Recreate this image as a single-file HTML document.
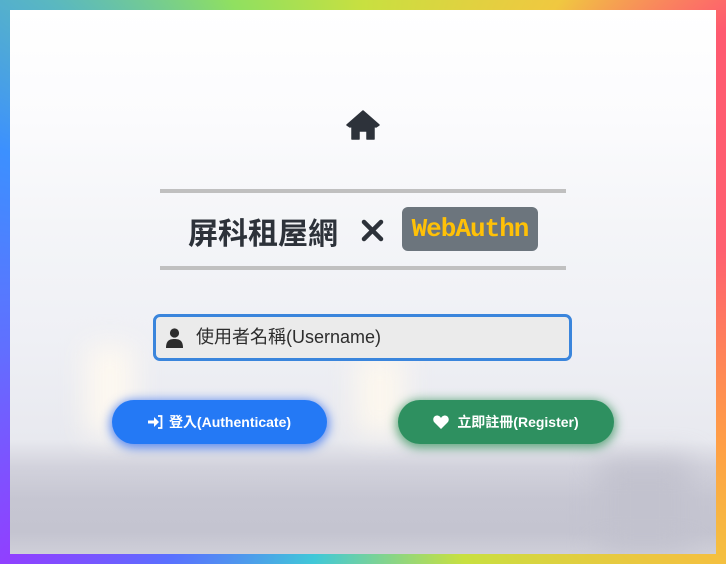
<!DOCTYPE html>
<html><head><meta charset="utf-8"><style>
*{margin:0;padding:0;box-sizing:border-box}
html,body{width:726px;height:564px;overflow:hidden}
body{position:relative;font-family:"Liberation Sans","Noto Sans CJK TC",sans-serif;
background:conic-gradient(from 0deg at 50% 50%,#c8e040 0deg,#f0c840 35deg,#ff5a70 55deg,#ff6070 85deg,#ffa045 115deg,#f4c040 128deg,#c8e040 160deg,#40c8d8 190deg,#5a70ff 215deg,#9040ff 232deg,#6070ff 260deg,#3c90ff 290deg,#5ab8c0 312deg,#90e060 335deg,#c8e040 360deg)}
.inner{position:absolute;left:10px;top:10px;width:706px;height:544px;overflow:hidden;
background:linear-gradient(180deg,#ffffff 0%,#fbfbfd 20%,#f4f5f8 40%,#eff0f5 60%,#e8e9ef 79%,#d2d2dc 84%,#c6c6d2 90%,#c4c4d0 96%,#cfcfd9 100%)}
.blob{position:absolute;filter:blur(14px)}
.line{position:absolute;left:160px;width:406px;height:4px;background:#c0c0c0}
.title{position:absolute;left:0;width:726px;top:203px;font-size:30px;font-weight:bold;color:#2d323a;height:48px}
.badge{position:absolute;left:402px;top:207px;width:136px;height:44px;background:#6c757d;border-radius:6px;color:#ffc107;font-family:"Liberation Mono",monospace;font-weight:bold;font-size:26px;text-align:center;line-height:44px;letter-spacing:-1px}
.input{position:absolute;left:153px;top:314px;width:419px;height:47px;border:3px solid #3a85dc;border-radius:7px;background:#ebebeb;font-size:18px;color:#2d2d2d;line-height:41px;padding-left:40px}
.btn{position:absolute;top:400px;height:44px;border-radius:22px;color:#fff;font-weight:bold;font-size:14px;line-height:44px;text-align:center}
.b1{left:112px;width:215px;background:#2479f5;box-shadow:0 2px 10px 2px rgba(36,100,240,.7)}
.b2{left:398px;width:216px;background:#2e9060;box-shadow:0 2px 10px 2px rgba(40,140,80,.7)}
</style></head><body>
<div class="inner">
<div class="blob" style="left:75px;top:335px;width:50px;height:90px;background:#fdf8f0"></div>
<div class="blob" style="left:345px;top:345px;width:50px;height:80px;background:#fcf7ee"></div>
<div class="blob" style="left:590px;top:450px;width:90px;height:90px;background:#c2c2ce"></div>
</div>
<svg style="position:absolute;left:346px;top:110px" width="34" height="30" viewBox="0 0 34 30"><path d="M17 1 L1 15 L4 17 L6 15.5 V29 H13 V21 H21 V29 H28 V15.5 L30 17 L33 15 Z" fill="#2d323a" stroke="#2d323a" stroke-width="1.5" stroke-linejoin="round"/></svg>
<div class="line" style="top:189px"></div>
<div class="line" style="top:266px"></div>
<div class="title"><span style="position:absolute;left:188px;top:6px">屏科租屋網</span></div>
<svg style="position:absolute;left:361px;top:219px" width="23" height="23" viewBox="0 0 23 23"><path d="M3 3 L20 20 M20 3 L3 20" stroke="#2d323a" stroke-width="4.5" stroke-linecap="round"/></svg>
<div class="badge">WebAuthn</div>
<div class="input">使用者名稱(Username)</div>
<svg style="position:absolute;left:166px;top:328px" width="17" height="20" viewBox="0 0 17 20"><circle cx="8.5" cy="5" r="4.6" fill="#2d2d2d"/><path d="M0 20 C0 13 3 11 8.5 11 C14 11 17 13 17 20 Z" fill="#2d2d2d"/></svg>
<div class="btn b1"><svg width="15" height="14" viewBox="0 0 15 14" style="vertical-align:-2px;margin-right:6px"><path d="M0 5.5 H6 V2 L11 7 L6 12 V8.5 H0 Z" fill="#fff"/><path d="M10 1 H13.5 V13 H10" stroke="#fff" stroke-width="1.8" fill="none"/></svg>登入(Authenticate)</div>
<div class="btn b2"><svg width="16" height="14" viewBox="0 0 16 14" style="vertical-align:-2px;margin-right:8px"><path d="M8 14 L1.5 7.5 C-1 5 0.5 0.5 4 0.5 C6 0.5 7.3 1.8 8 3 C8.7 1.8 10 0.5 12 0.5 C15.5 0.5 17 5 14.5 7.5 Z" fill="#fff"/></svg>立即註冊(Register)</div>
</body></html>
